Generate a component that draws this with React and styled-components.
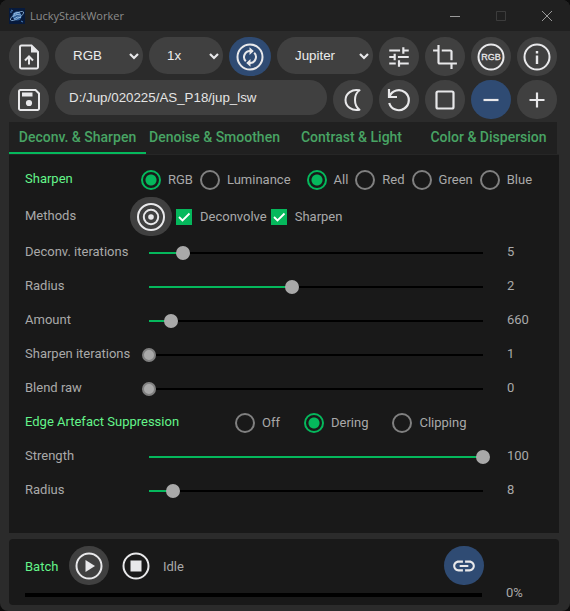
import React, { useState } from "react";
import styled, { createGlobalStyle, css } from "styled-components";
import { MdTune, MdCrop, MdLink } from "react-icons/md";

const color = {
  title: "#202020",
  window: "#2b2b2b",
  panel: "#191919",
  control: "#404040",
  active: "#2f4b73",
  green: "#05b85c",
  tab: "#48a464",
  heading: "#64f58a",
  text: "#a9a9a9",
  icon: "#e8e8ea",
};

const GlobalStyle = createGlobalStyle`
  *, *::before, *::after { box-sizing: border-box; }
  body {
    margin: 0;
    background: #0c0c0c;
    color: ${color.text};
    font-family: Roboto, "Liberation Sans", sans-serif;
    font-size: 13px;
    line-height: 16px;
  }
  button, input, select { margin: 0; }
`;

const Window = styled.div`
  display: flex;
  flex-direction: column;
  min-height: 100vh;
  border-radius: 8px;
  overflow: hidden;
  background: ${color.window};
`;

const TitleBar = styled.header`
  display: flex;
  align-items: center;
  height: 31px;
  padding-left: 9px;
  background: ${color.title};
`;

const Title = styled.h1`
  flex: 1;
  margin: 0 0 0 5px;
  color: #8c8c8c;
  font-family: "Open Sans", "Noto Sans", sans-serif;
  font-size: 11px;
  font-weight: 400;
`;

const CaptionButton = styled.button`
  display: grid;
  place-items: center;
  width: 46px;
  height: 31px;
  padding: 0;
  border: 0;
  background: none;
  color: ${(p) => (p.disabled ? "#3c3c3c" : "#9a9a9a")};
`;

const Toolbar = styled.div`
  display: grid;
  gap: 4px;
  padding: 6px 13px 3px 9px;
`;

const ToolRow = styled.div`
  display: flex;
  align-items: flex-start;
  gap: 6px;
`;

const RoundButton = styled.button`
  display: grid;
  place-items: center;
  flex: none;
  width: ${(p) => (p.$wide ? 42 : 40)}px;
  height: 39px;
  padding: 0;
  border: 0;
  border-radius: 20px;
  background: ${(p) => (p.$bare ? "transparent" : p.$active ? color.active : color.control)};
  color: ${color.icon};
  cursor: pointer;
`;

const SelectBox = styled.div`
  display: grid;
  flex: ${(p) => p.$grow} 1 0;
  align-items: center;
  & > * { grid-area: 1 / 1; }
  & > svg { justify-self: end; margin-right: 4px; color: ${color.icon}; pointer-events: none; }
`;

const Select = styled.select`
  appearance: none;
  width: 100%;
  height: 37px;
  padding: 0 18px;
  border: 0;
  border-radius: 19px;
  background: ${color.control};
  color: #ececec;
  font-family: "Liberation Sans", Arial, sans-serif;
`;

const PathInput = styled.input`
  flex: 1;
  min-width: 0;
  height: 35px;
  padding: 0 14px;
  border: 0;
  border-radius: 18px;
  background: ${color.control};
  color: #e4e4e4;
  font-family: "Liberation Sans", Arial, sans-serif;
`;

const Tabs = styled.nav`
  display: grid;
  grid-template-columns: repeat(4, 1fr);
  margin: 0 13px 0 9px;
  background: ${color.title};
`;

const Tab = styled.button`
  height: 32px;
  padding: 0;
  border: 0;
  border-bottom: 2px solid ${(p) => (p.$selected ? color.green : "transparent")};
  background: none;
  color: ${color.tab};
  font-family: inherit;
  font-size: 14px;
  font-weight: 500;
  white-space: nowrap;
`;

const Panel = styled.main`
  flex: 1;
  margin: 0 11px 6px 9px;
  padding: 8px 0 24px 16px;
  background: ${color.panel};
  border-top: 1px solid #262626;
`;

const Row = styled.div`
  display: grid;
  grid-template-columns: ${(p) => p.$label || 117}px 1fr ${(p) => (p.$value ? "69px" : "")};
  align-items: center;
  height: ${(p) => (p.$tall ? 39 : 34)}px;
`;

const labelText = css`
  padding-bottom: 2px;
  white-space: nowrap;
`;

const RowLabel = styled.label`
  ${labelText}
`;

const Heading = styled.span`
  ${labelText}
  color: ${color.heading};
`;

const Value = styled.output`
  ${labelText}
  padding-left: 17px;
`;

const Options = styled.div`
  display: flex;
  align-items: center;
  gap: ${(p) => p.$gap}px;
`;

const Choice = styled.label`
  display: flex;
  align-items: center;
  gap: ${(p) => p.$gap}px;
`;

const Radio = styled.input`
  appearance: none;
  width: 20px;
  height: 20px;
  border: 2px solid #808080;
  border-radius: 50%;
  &:checked {
    border-color: ${color.green};
    background: radial-gradient(circle, ${color.green} 5px, transparent 6px);
  }
`;

const Check = styled.input`
  appearance: none;
  width: 16px;
  height: 16px;
  border: 2px solid #808080;
  &:checked {
    border: 0;
    background: ${color.green};
  }
`;

const CheckBox = styled.span`
  display: grid;
  & > * { grid-area: 1 / 1; }
  & > svg { pointer-events: none; color: #fff; }
`;

const Range = styled.input`
  appearance: none;
  width: 100%;
  height: 14px;
  background: none;
  &::-webkit-slider-runnable-track {
    height: 14px;
    background:
      linear-gradient(${color.green}, ${color.green}) 7px 6px /
        calc((100% - 14px) * var(--fill)) 2px no-repeat,
      linear-gradient(#000, #000) 7px 6px / calc(100% - 14px) 2px no-repeat;
  }
  &::-webkit-slider-thumb {
    appearance: none;
    width: 14px;
    height: 14px;
    border: 2px solid ${(p) => (p.$atMin ? "#808080" : "#a9a9a9")};
    border-radius: 50%;
    background: #a9a9a9;
  }
`;

const BatchPanel = styled.section`
  margin: 0 11px 6px 9px;
  padding: 7px 0 8px 16px;
  border-radius: 4px;
  background: ${color.panel};
`;

const BatchRow = styled.div`
  display: flex;
  align-items: center;
  margin-right: 75px;
`;

const BatchTitle = styled.span`
  width: 44px;
  padding-top: 3px;
  color: ${color.heading};
`;

const BatchButtons = styled.div`
  display: flex;
  gap: 6px;
  margin-right: 6px;
`;

const Status = styled.span`
  flex: 1;
  padding-top: 3px;
`;

const ProgressRow = styled.div`
  display: grid;
  grid-template-columns: 1fr 77px;
  align-items: center;
  height: 12px;
`;

const Progress = styled.progress`
  appearance: none;
  width: 100%;
  height: 4px;
  border: 0;
  &::-webkit-progress-bar { background: #000; }
  &::-webkit-progress-value { background: ${color.green}; }
`;

const Percent = styled.span`
  padding: 0 0 4px 24px;
`;

function Stroke({ size, width = 2, children }) {
  return (
    <svg
      width={size}
      height={size}
      viewBox={`0 0 ${size} ${size}`}
      fill="none"
      stroke="currentColor"
      strokeWidth={width}
      aria-hidden="true"
    >
      {children}
    </svg>
  );
}

const AppIcon = () => (
  <svg width="16" height="16" viewBox="0 0 16 16" aria-hidden="true">
    <rect width="16" height="16" fill="#071a3c" />
    <circle cx="8" cy="8" r="4.6" fill="#2c5c96" />
    <path d="M4.5 6Q8 3 11 5M4 8.5Q8 5 12 7M5 11Q8 8 12 9.500" stroke="#a9cdec" strokeWidth=".8" fill="none" />
    <ellipse cx="8" cy="8" rx="7.6" ry="2.6" transform="rotate(-32 8 8)" fill="none" stroke="#9cc4e8" strokeWidth=".7" />
    <path d="M1 4h2M2 2l2 1M12 13l2 1" stroke="#4d83bd" />
  </svg>
);

const Chevron = () => (
  <Stroke size={10} width={2.2}>
    <path d="M1 3l4 4 4-4" />
  </Stroke>
);

const UploadIcon = () => (
  <Stroke size={30}>
    <path d="M17.500 3.500H7.500a1.500 1.500 0 0 0-1.500 1.500v20a1.500 1.500 0 0 0 1.500 1.500h15a1.500 1.500 0 0 0 1.500-1.500V10z" />
    <path d="M17 3.500V10.500h7z" fill="currentColor" stroke="none" />
    <path d="M15 22.500v-7.500M11 18.500l4-4 4 4" />
  </Stroke>
);

const SaveIcon = () => (
  <Stroke size={30}>
    <path d="M21.500 5H6.500A1.500 1.500 0 0 0 5 6.500v17A1.500 1.500 0 0 0 6.500 25h17a1.500 1.500 0 0 0 1.500-1.500v-15z" />
    <path d="M8 7.500h10.500v4h-10.500z" fill="currentColor" stroke="none" />
    <circle cx="15" cy="18" r="3.100" fill="currentColor" stroke="none" />
  </Stroke>
);

const RefreshIcon = () => (
  <Stroke size={28}>
    <circle cx="14" cy="14" r="12.500" />
    <path d="M9.800 18.200A6 6 0 0 1 14.500 8M18.200 9.800A6 6 0 0 1 13.500 20" />
    <path d="M13.500 4.200l4.300 3.900-4.300 3.900zM14.500 16l-4.300 3.900 4.300 3.900z" fill="currentColor" stroke="none" />
  </Stroke>
);

const RgbIcon = () => (
  <Stroke size={28}>
    <circle cx="14" cy="14" r="12.500" />
    <text
      x="14"
      y="17"
      fill="currentColor"
      strokeWidth=".3"
      textAnchor="middle"
      fontFamily="Liberation Sans, sans-serif"
      fontSize="9"
    >
      RGB
    </text>
  </Stroke>
);

const InfoIcon = () => (
  <Stroke size={28}>
    <circle cx="14" cy="14" r="12.500" />
    <path d="M14 12.500v8.500M14 8v2.500" strokeWidth="2.4" />
  </Stroke>
);

const MoonIcon = () => (
  <Stroke size={24}>
    <path
      d="M18.500 2.300C11 .600 4.500 5.500 4.500 12s6.500 11.400 14 9.700C12.500 17.500 12.500 6.500 18.500 2.300z"
      strokeLinejoin="round"
    />
  </Stroke>
);

const UndoIcon = () => (
  <Stroke size={24} width={2.2}>
    <path d="M2 1v8h8M2.500 8.500A10 10 0 1 1 2.200 15" />
  </Stroke>
);

const SquareIcon = () => (
  <Stroke size={20} width={2.2}>
    <rect x="1.500" y="1.500" width="17" height="17" rx="1.500" />
  </Stroke>
);

const MinusIcon = () => (
  <Stroke size={16} width={2.2}>
    <path d="M.5 8h15" />
  </Stroke>
);

const PlusIcon = () => (
  <Stroke size={16} width={2.2}>
    <path d="M.5 8h15M8 .5v15" />
  </Stroke>
);

const TargetIcon = () => (
  <Stroke size={28}>
    <circle cx="14" cy="14" r="13" />
    <circle cx="14" cy="14" r="7.200" />
    <circle cx="14" cy="14" r="2.800" fill="currentColor" stroke="none" />
  </Stroke>
);

const PlayIcon = () => (
  <Stroke size={28}>
    <circle cx="14" cy="14" r="12.500" />
    <path d="M10.500 8v12l9.500-6z" fill="currentColor" stroke="none" />
  </Stroke>
);

const StopIcon = () => (
  <Stroke size={28}>
    <circle cx="14" cy="14" r="12.500" />
    <path d="M8.500 8.500h11v11h-11z" fill="currentColor" stroke="none" />
  </Stroke>
);

function Dropdown({ label, grow, options }) {
  return (
    <SelectBox $grow={grow}>
      <Select aria-label={label}>
        {options.map((o) => (
          <option key={o}>{o}</option>
        ))}
      </Select>
      <Chevron />
    </SelectBox>
  );
}

function RadioSet({ name, gap = 7, initial, options }) {
  const [picked, setPicked] = useState(initial);
  return (
    <Options $gap={gap} role="radiogroup" aria-label={name}>
      {options.map((o) => (
        <Choice key={o} $gap={7}>
          <Radio type="radio" name={name} checked={picked === o} onChange={() => setPicked(o)} />
          {o}
        </Choice>
      ))}
    </Options>
  );
}

function Tick({ children }) {
  const [on, setOn] = useState(true);
  return (
    <Choice $gap={8}>
      <CheckBox>
        <Check type="checkbox" checked={on} onChange={() => setOn(!on)} />
        {on && (
          <Stroke size={16} width={1.8}>
            <path d="M3 8l3.500 3.500L13.500 4.500" />
          </Stroke>
        )}
      </CheckBox>
      {children}
    </Choice>
  );
}

function SliderRow({ id, label, min, max, step = 1, initial }) {
  const [value, setValue] = useState(initial);
  return (
    <Row $value>
      <RowLabel htmlFor={id}>{label}</RowLabel>
      <Range
        id={id}
        type="range"
        min={min}
        max={max}
        step={step}
        value={value}
        $atMin={value === min}
        onChange={(e) => setValue(Number(e.target.value))}
        style={{ "--fill": (value - min) / (max - min) }}
      />
      <Value htmlFor={id}>{value}</Value>
    </Row>
  );
}

const tabs = ["Deconv. & Sharpen", "Denoise & Smoothen", "Contrast & Light", "Color & Dispersion"];

const sharpenSliders = [
  { id: "deconv-iterations", label: "Deconv. iterations", min: 1, max: 40, initial: 5 },
  { id: "radius", label: "Radius", min: 0.5, max: 4, step: 0.1, initial: 2 },
  { id: "amount", label: "Amount", min: 0, max: 10000, initial: 660 },
  { id: "sharpen-iterations", label: "Sharpen iterations", min: 1, max: 10, initial: 1 },
  { id: "blend-raw", label: "Blend raw", min: 0, max: 100, initial: 0 },
];

const edgeSliders = [
  { id: "strength", label: "Strength", min: 0, max: 100, initial: 100 },
  { id: "edge-radius", label: "Radius", min: 1, max: 100, initial: 8 },
];

export default function App() {
  const [tab, setTab] = useState(tabs[0]);
  return (
    <>
      <GlobalStyle />
      <Window>
        <TitleBar>
          <AppIcon />
          <Title>LuckyStackWorker</Title>
          <CaptionButton aria-label="Minimize">
            <Stroke size={10} width={1}><path d="M0 5.500h10" /></Stroke>
          </CaptionButton>
          <CaptionButton aria-label="Maximize" disabled>
            <Stroke size={10} width={1}><path d="M.5.5h9v9h-9z" /></Stroke>
          </CaptionButton>
          <CaptionButton aria-label="Close">
            <Stroke size={10} width={1}><path d="M0 0l10 10M10 0L0 10" /></Stroke>
          </CaptionButton>
        </TitleBar>

        <Toolbar>
          <ToolRow>
            <RoundButton aria-label="Open file"><UploadIcon /></RoundButton>
            <Dropdown label="Channel" grow={88} options={["RGB", "Red", "Green", "Blue"]} />
            <Dropdown label="Scale" grow={74} options={["1x", "1.5x", "2x"]} />
            <RoundButton aria-label="Refresh" $active $wide><RefreshIcon /></RoundButton>
            <Dropdown label="Profile" grow={96} options={["Jupiter", "Saturn", "Mars", "Moon"]} />
            <RoundButton aria-label="Settings"><MdTune size={26} /></RoundButton>
            <RoundButton aria-label="Crop"><MdCrop size={26} /></RoundButton>
            <RoundButton aria-label="RGB alignment"><RgbIcon /></RoundButton>
            <RoundButton aria-label="Information"><InfoIcon /></RoundButton>
          </ToolRow>
          <ToolRow>
            <RoundButton aria-label="Save"><SaveIcon /></RoundButton>
            <PathInput aria-label="File path" defaultValue="D:/Jup/020225/AS_P18/jup_lsw" />
            <RoundButton aria-label="Night mode"><MoonIcon /></RoundButton>
            <RoundButton aria-label="Reset"><UndoIcon /></RoundButton>
            <RoundButton aria-label="Full size"><SquareIcon /></RoundButton>
            <RoundButton aria-label="Zoom out" $active><MinusIcon /></RoundButton>
            <RoundButton aria-label="Zoom in"><PlusIcon /></RoundButton>
          </ToolRow>
        </Toolbar>

        <Tabs role="tablist">
          {tabs.map((t) => (
            <Tab key={t} role="tab" aria-selected={t === tab} $selected={t === tab} onClick={() => setTab(t)}>
              {t}
            </Tab>
          ))}
        </Tabs>

        <Panel>
          <Row $label={116}>
            <Heading>Sharpen</Heading>
            <Options $gap={16}>
              <RadioSet name="Mode" initial="RGB" options={["RGB", "Luminance"]} />
              <RadioSet name="Channels" initial="All" options={["All", "Red", "Green", "Blue"]} />
            </Options>
          </Row>
          <Row $label={105} $tall>
            <RowLabel as="span">Methods</RowLabel>
            <Options $gap={4}>
              <RoundButton aria-label="Point spread function" $wide><TargetIcon /></RoundButton>
              <Tick>Deconvolve</Tick>
              <Tick>Sharpen</Tick>
            </Options>
          </Row>
          {sharpenSliders.map((s) => <SliderRow key={s.id} {...s} />)}
          <Row $label={210}>
            <Heading>Edge Artefact Suppression</Heading>
            <RadioSet name="Edge artefact suppression" gap={24} initial="Dering" options={["Off", "Dering", "Clipping"]} />
          </Row>
          {edgeSliders.map((s) => <SliderRow key={s.id} {...s} />)}
        </Panel>

        <BatchPanel>
          <BatchRow>
            <BatchTitle>Batch</BatchTitle>
            <BatchButtons>
              <RoundButton aria-label="Start batch"><PlayIcon /></RoundButton>
              <RoundButton aria-label="Stop batch" $bare $wide><StopIcon /></RoundButton>
            </BatchButtons>
            <Status>Idle</Status>
            <RoundButton aria-label="Link" $active><MdLink size={26} /></RoundButton>
          </BatchRow>
          <ProgressRow>
            <Progress aria-label="Batch progress" value={0} max={100} />
            <Percent>0%</Percent>
          </ProgressRow>
        </BatchPanel>
      </Window>
    </>
  );
}
